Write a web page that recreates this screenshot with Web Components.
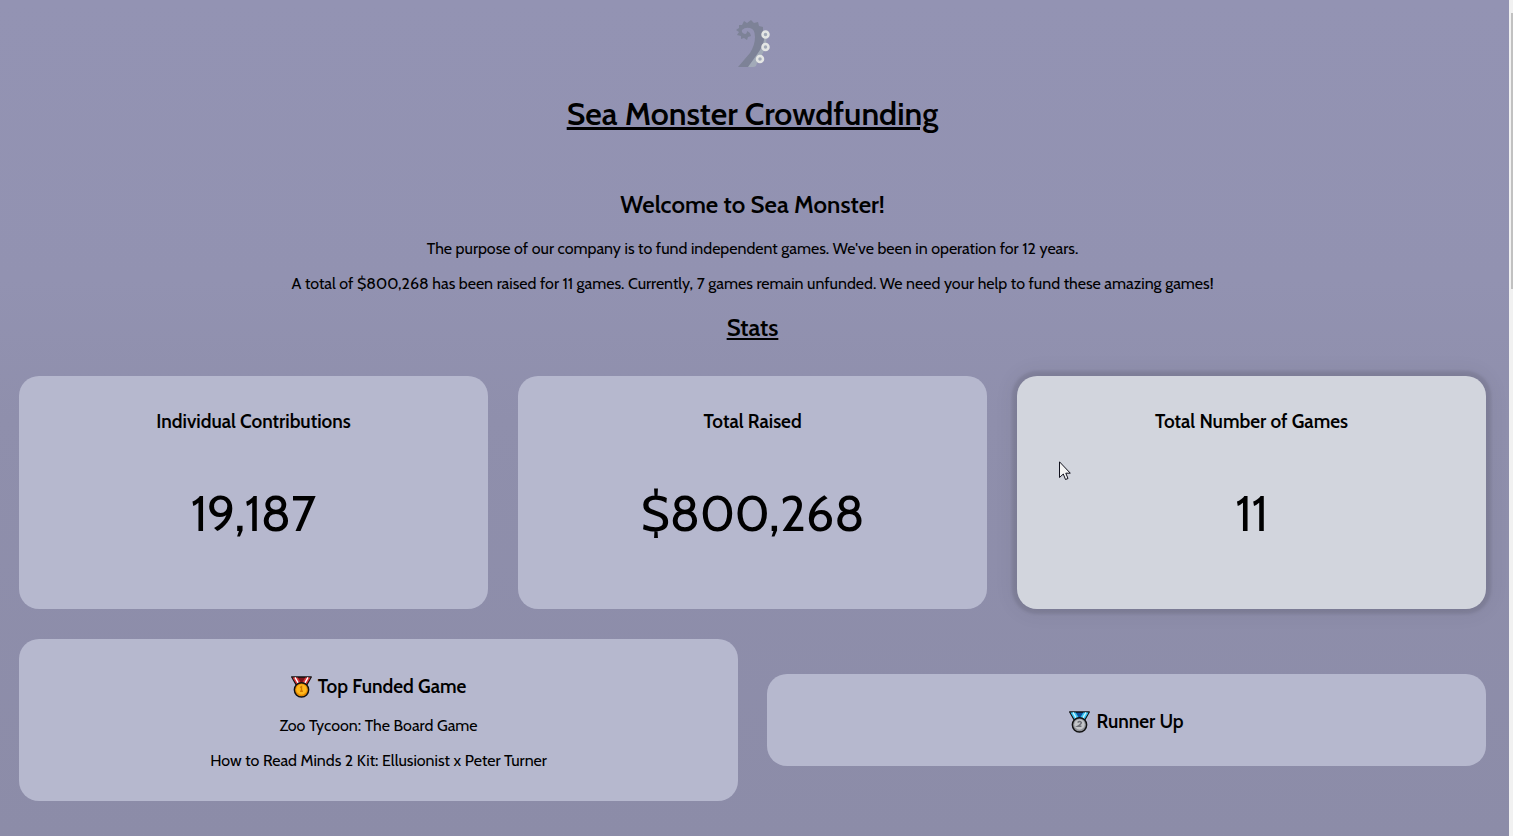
<!DOCTYPE html>
<html lang="en">
<head>
<meta charset="utf-8">
<title>Sea Monster Crowdfunding</title>
<style>
  body { margin: 0; font: 16px/20px Cabin, Lato, sans-serif; color: #000; }
</style>
</head>
<body>
<sea-page>
  <sea-header></sea-header>
  <sea-intro heading="Welcome to Sea Monster!">
    <p>The purpose of our company is to fund independent games. We've been in operation for 12 years.</p>
    <p>A total of $800,268 has been raised for 11 games. Currently, 7 games remain unfunded. We need your help to fund these amazing games!</p>
  </sea-intro>
  <stats-board heading="Stats">
    <stat-card label="Individual Contributions">19,187</stat-card>
    <stat-card label="Total Raised">$800,268</stat-card>
    <stat-card label="Total Number of Games" active>11</stat-card>
    <medal-card slot="ranking" rank="1" label="Top Funded Game">
      <p>Zoo Tycoon: The Board Game</p>
      <p>How to Read Minds 2 Kit: Ellusionist x Peter Turner</p>
    </medal-card>
    <medal-card slot="ranking" rank="2" label="Runner Up"></medal-card>
  </stats-board>
</sea-page>

<script>
class SeaElement extends HTMLElement {
  connectedCallback() {
    if (this.shadowRoot) return;
    this.attachShadow({ mode: 'open' }).innerHTML = this.render();
  }
}

customElements.define('sea-page', class extends SeaElement {
  render() {
    return `<style>
      :host { display: flex; min-height: 100vh; background: linear-gradient(#9393b3 0, #9292b1 280px, #8f8fac 420px, #8c8ca8 100%); }
      main { flex: 1; min-width: 0; padding: 20px 23px 35px 19px; text-align: center; }
      .track { flex: none; width: 4px; background: #f1f1f1; }
      .thumb { margin: 13px 0 0 2px; height: 276px; background: #c1c1c1; }
    </style>
    <main><slot></slot></main>
    <div class="track"><div class="thumb"></div></div>`;
  }
});

customElements.define('sea-header', class extends SeaElement {
  render() {
    return `<style>
      :host { display: block; }
      svg { display: block; margin: 0 auto 26px; }
      h1 { margin: 0; font-size: 32px; line-height: 40px; font-weight: 600; text-decoration: underline; }
    </style>
    <header>
      <svg width="36" height="48" viewBox="-1 0 36 48" role="img" aria-label="Tentacle">
        <path fill="#a2aab8" d="M31 12 L30 25 Q28 33 21 43 L20 46 Q19 47 17 47 H9 L22 31 L27 12Z"/>
        <path fill="#7d8297" d="M2 47 L14 33 Q19 25 19 17 Q19 9 14 8 Q9 7 6 10 Q5 13 9 14 Q11 14 11 11 L14 13 L15 16 L12 17 L11 20 L8 18 L5 19 L5 16 L1 15 L3 12 L0 10 L3 8 L3 5 L6 5 L8 1 L11 3 L15 0 L18 3 L22 2 L23 6 L27 7 L27 11 Q29 15 28 20 Q27 26 22 33 L12 47Z"/>
        <g fill="#a2aab8" stroke="#e4e6e4" stroke-width="2.500">
          <circle cx="29.500" cy="14.500" r="3"/><circle cx="29.500" cy="27" r="3"/><circle cx="24" cy="39" r="3"/>
        </g>
      </svg>
      <h1>Sea Monster Crowdfunding</h1>
    </header>`;
  }
});

customElements.define('sea-intro', class extends SeaElement {
  render() {
    return `<style>
      :host { display: block; margin-top: 56px; }
      h2 { margin: 0 0 19px; font-size: 24px; line-height: 30px; font-weight: 600; }
      ::slotted(p) { margin: 0 0 15px; }
    </style>
    <h2>${this.getAttribute('heading')}</h2><slot></slot>`;
  }
});

customElements.define('stats-board', class extends SeaElement {
  render() {
    return `<style>
      :host { display: block; margin-top: 19px; }
      h2 { margin: 0 0 33px; font-size: 24px; line-height: 30px; font-weight: 600; text-decoration: underline; }
      .stats { display: grid; grid-template-columns: repeat(3, 1fr); gap: 30px; }
      .ranking { display: grid; grid-template-columns: repeat(2, 1fr); gap: 29px; align-items: center; margin-top: 30px; }
    </style>
    <h2>${this.getAttribute('heading')}</h2>
    <div class="stats"><slot></slot></div>
    <div class="ranking"><slot name="ranking"></slot></div>`;
  }
});

customElements.define('stat-card', class extends SeaElement {
  render() {
    const pointer = this.hasAttribute('active') ? `<svg class="pointer" width="12" height="20" viewBox="0 0 12 20" aria-hidden="true">
      <path d="M.5 .8 V16.500 L4.300 13 L6.500 18.500 L9 17.500 L6.800 12.200 H11.300Z" fill="#f4f4f4" stroke="#10101c"/></svg>` : '';
    return `<style>
      :host { display: block; position: relative; padding: 35px 30px 65px; border-radius: 20px; background: #b6b8ce; }
      :host([active]) { background: #d2d5dd; box-shadow: 0 0 3px 5px rgba(0,0,0,.09), 0 0 20px 6px rgba(0,0,0,.05); }
      h3 { margin: 0 0 51px; font-size: 19px; line-height: 22px; font-weight: 600; }
      .value { margin: 0; font-size: 50px; line-height: 60px; }
      .pointer { position: absolute; left: 42px; top: 85px; }
    </style>
    <h3>${this.getAttribute('label')}</h3>
    <p class="value"><slot></slot></p>${pointer}`;
  }
});

customElements.define('medal-card', class extends SeaElement {
  render() {
    const first = this.getAttribute('rank') === '1';
    const c = first
      ? { band: '#d8343a', stripe: '#fff', knot: '#7c1218', rim: '#e58a00', face: '#ffb81c', ink: '#d07800' }
      : { band: '#35c3f2', stripe: '#c8f4ff', knot: '#0a4c98', rim: '#8d8f96', face: '#c3c5c8', ink: '#6f7178' };
    const digit = first ? 'M9.500 13 L11 12 V17 M9.500 17 H12.500' : 'M9 13 Q11 11 13 13 Q13 14.500 9 17 H13';
    return `<style>
      :host { display: block; padding: 35px 30px 30px; border-radius: 20px; background: #b6b8ce; }
      h3 { display: flex; justify-content: center; align-items: center; gap: 6px; margin: 0 0 1px; font-size: 19px; line-height: 26px; font-weight: 600; }
      ::slotted(p) { margin: 15px 0 0; }
      .list { display: flow-root; }
    </style>
    <h3><svg width="21" height="22" viewBox="0 1 22 23" role="img" aria-label="${first ? 'Gold' : 'Silver'} medal">
      <path d="M.8 2 H21.200 L16 11 H6Z" fill="${c.knot}" stroke="#111" stroke-width="1.500" stroke-linejoin="round"/>
      <path d="M1.500 2.500 H7 L11 9 L15 2.500 H20.500 L15.500 11 H6.500Z" fill="${c.band}"/>
      <path d="M4.200 2.500 L8.500 10 M17.800 2.500 L13.500 10" stroke="${c.stripe}" stroke-width="1.500"/>
      <circle cx="11" cy="15.500" r="7.500" fill="${c.rim}" stroke="#111" stroke-width="1.500"/>
      <circle cx="11" cy="15" r="5.500" fill="${c.face}"/>
      <path d="${digit}" fill="none" stroke="${c.ink}" stroke-width="1.500"/>
    </svg><span>${this.getAttribute('label')}</span></h3>
    <div class="list"><slot></slot></div>`;
  }
});
</script>
</body>
</html>
